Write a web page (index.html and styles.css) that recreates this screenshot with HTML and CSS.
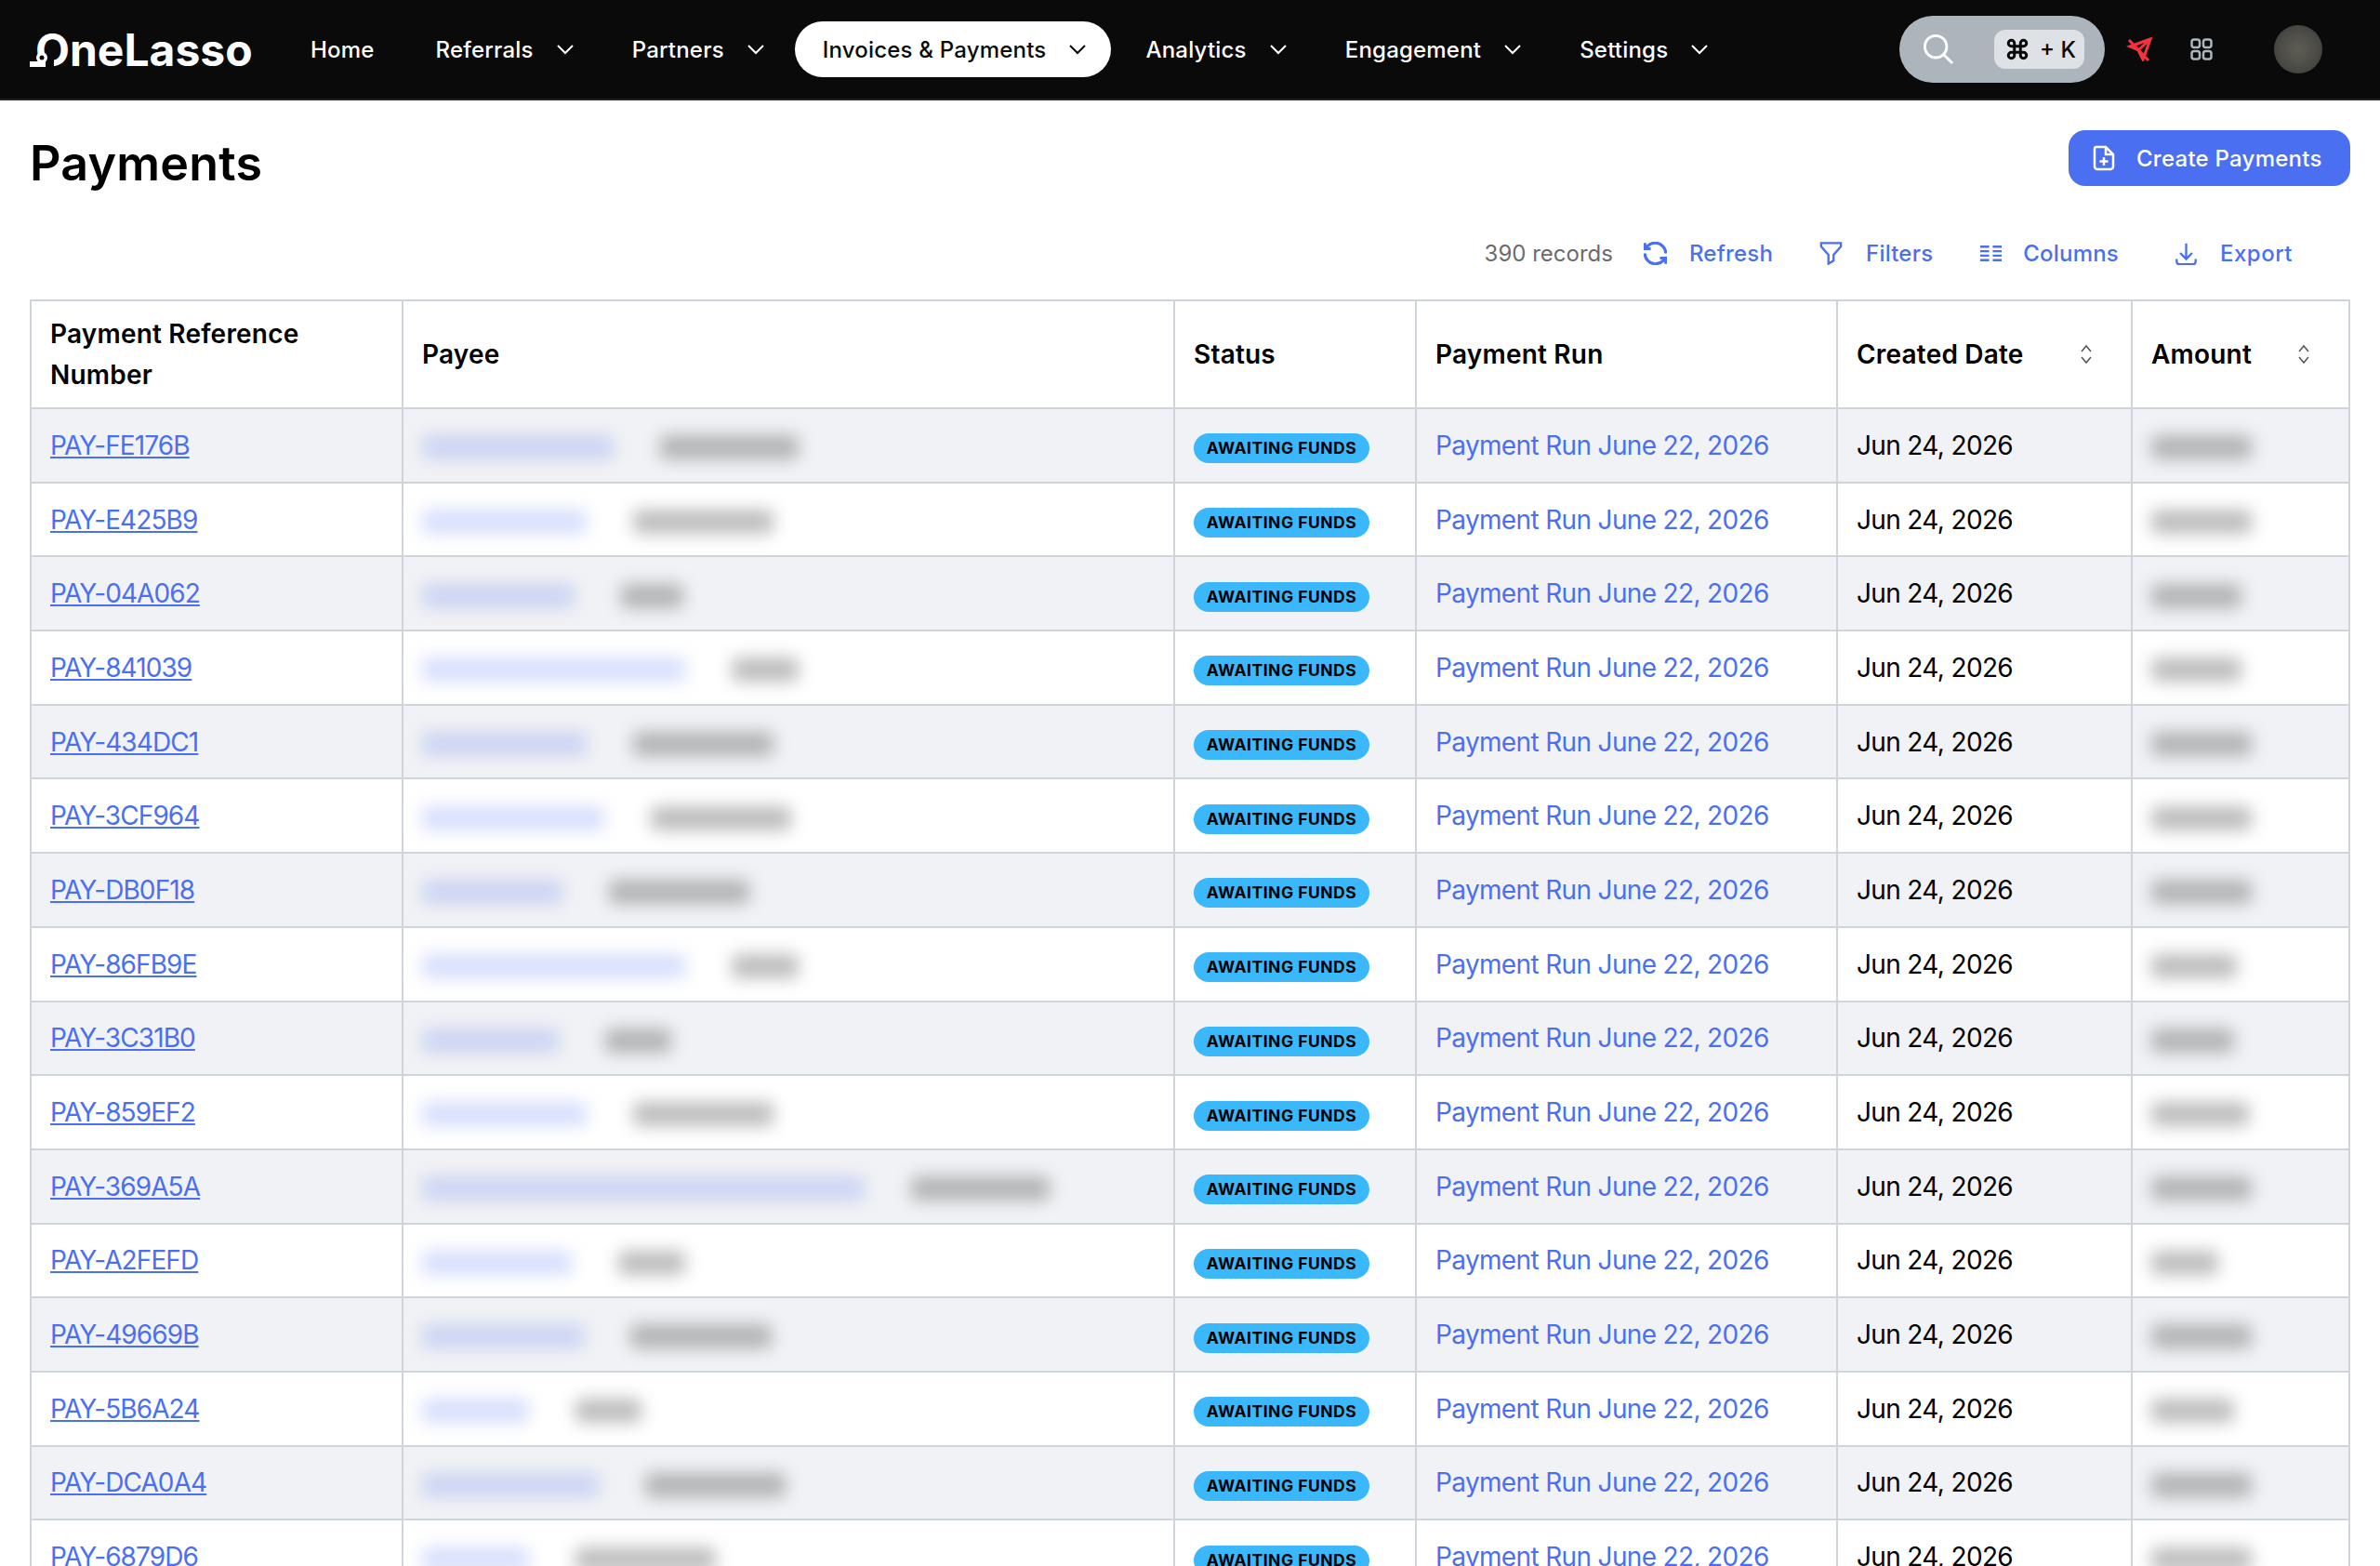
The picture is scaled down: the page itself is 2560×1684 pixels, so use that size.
FILE: index.html
```html
<!DOCTYPE html>
<html lang="en">
<head>
    <meta charset="UTF-8">
    <title>Payments</title>
    <link rel="stylesheet" href="styles.css">
</head>
<body>
    <div class="topbar">
        <div class="logo">
            <span class="logo-text">OneLasso</span>
            <svg class="logo-knot" viewBox="0 0 26 18"><path d="M16 4h10v14H16z" fill="#0a0a0a"/><path d="M0 12h17v6H0z" fill="#fff"/><circle cx="13" cy="8" r="6" fill="#fff"/><circle cx="13" cy="8" r="2.500" fill="#0a0a0a"/></svg>
        </div>
        <div class="nav">
            <a class="nav-item nav-home">Home</a>
            <a class="nav-item">Referrals <svg class="chev" viewBox="0 0 20 12"><path d="M2 2l8 8 8-8"/></svg></a>
            <a class="nav-item">Partners <svg class="chev" viewBox="0 0 20 12"><path d="M2 2l8 8 8-8"/></svg></a>
            <a class="nav-item active">Invoices &amp; Payments <svg class="chev" viewBox="0 0 20 12"><path d="M2 2l8 8 8-8"/></svg></a>
            <a class="nav-item">Analytics <svg class="chev" viewBox="0 0 20 12"><path d="M2 2l8 8 8-8"/></svg></a>
            <a class="nav-item">Engagement <svg class="chev" viewBox="0 0 20 12"><path d="M2 2l8 8 8-8"/></svg></a>
            <a class="nav-item">Settings <svg class="chev" viewBox="0 0 20 12"><path d="M2 2l8 8 8-8"/></svg></a>
        </div>
        <div class="top-right">
            <div class="search">
                <svg class="search-icon" viewBox="0 0 36 36"><circle cx="15" cy="15" r="12.500"/><path d="M24 24l10 10"/></svg>
                <div class="kbd">
                    <svg class="cmd-icon" viewBox="0 0 24 24"><path d="M15 6v12a3 3 0 1 0 3-3H6a3 3 0 1 0 3 3V6a3 3 0 1 0-3 3h12a3 3 0 1 0-3-3"/></svg>
                    <span>+ K</span>
                </div>
            </div>
            <svg class="plane-icon" viewBox="0 0 28 26"><path d="M26 2L4 10l9 4 5 10z"/><path d="M26 2L13 14"/><path d="M3 3l21 22"/></svg>
            <svg class="grid-icon" viewBox="0 0 24 24"><rect x="1.500" y="1.500" width="8.500" height="8.500" rx="2.500"/><rect x="14" y="1.500" width="8.500" height="8.500" rx="2.500"/><rect x="1.500" y="14" width="8.500" height="8.500" rx="2.500"/><rect x="14" y="14" width="8.500" height="8.500" rx="2.500"/></svg>
            <div class="avatar"></div>
        </div>
    </div>

    <div class="page">
        <div class="title-row">
            <h1>Payments</h1>
            <button class="btn-create">
                <svg class="doc-icon" viewBox="0 0 24 28"><path d="M4 2h10l8 8v13a3 3 0 0 1-3 3H5a3 3 0 0 1-3-3V4a2 2 0 0 1 2-2z"/><path d="M14 2v8h8"/><path d="M12 13v9M7.500 17.500h9"/></svg>
                Create Payments
            </button>
        </div>

        <div class="toolbar">
            <span class="records">390 records</span>
            <a class="tool tool-refresh">
                <svg viewBox="2 2 20 20"><path d="M21 12a9 9 0 0 0-9-9 9.750 9.750 0 0 0-6.740 2.740L3 8"/><path d="M3 3v5h5"/><path d="M3 12a9 9 0 0 0 9 9 9.750 9.750 0 0 0 6.740-2.740L21 16"/><path d="M16 16h5v5"/></svg>
                Refresh
            </a>
            <a class="tool tool-filters">
                <svg viewBox="0 0 26 27"><path d="M1.500 1.500h23v4L16 15v7l-6 3.500V15L1.500 5.500z"/></svg>
                Filters
            </a>
            <a class="tool tool-columns">
                <svg viewBox="0 0 26 18"><path d="M1 1.500h10M15 1.500h10M1 6.500h10M15 6.500h10M1 11.500h10M15 11.500h10M1 16.500h10M15 16.500h10"/></svg>
                Columns
            </a>
            <a class="tool tool-export">
                <svg viewBox="0 0 26 27"><path d="M13 2v17M6 13l7 7 7-7"/><path d="M2 20v3a3 3 0 0 0 3 3h16a3 3 0 0 0 3-3v-3"/></svg>
                Export
            </a>
        </div>

        <table class="pay-table">
            <colgroup>
                <col class="col-ref"><col class="col-payee"><col class="col-status"><col class="col-run"><col class="col-date"><col class="col-amount">
            </colgroup>
            <thead>
                <tr>
                    <th>Payment Reference Number</th>
                    <th>Payee</th>
                    <th>Status</th>
                    <th>Payment Run</th>
                    <th><div class="th-sort">Created Date <svg class="sort" viewBox="0 0 14 22"><path d="M2 8l5-6 5 6M2 14l5 6 5-6"/></svg></div></th>
                    <th><div class="th-sort">Amount <svg class="sort" viewBox="0 0 14 22"><path d="M2 8l5-6 5 6M2 14l5 6 5-6"/></svg></div></th>
                </tr>
            </thead>
            <tbody>
                <tr><td><a class="ref">PAY-FE176B</a></td><td><span class="blur-name" style="width:206px"></span><span class="blur-sub" style="width:149px"></span></td><td><span class="badge">AWAITING FUNDS</span></td><td><a class="run">Payment Run June 22, 2026</a></td><td>Jun 24, 2026</td><td><span class="blur-sub" style="width:108px"></span></td></tr>
                <tr><td><a class="ref">PAY-E425B9</a></td><td><span class="blur-name" style="width:177px"></span><span class="blur-sub" style="width:151px"></span></td><td><span class="badge">AWAITING FUNDS</span></td><td><a class="run">Payment Run June 22, 2026</a></td><td>Jun 24, 2026</td><td><span class="blur-sub" style="width:108px"></span></td></tr>
                <tr><td><a class="ref">PAY-04A062</a></td><td><span class="blur-name" style="width:164px"></span><span class="blur-sub" style="width:67px"></span></td><td><span class="badge">AWAITING FUNDS</span></td><td><a class="run">Payment Run June 22, 2026</a></td><td>Jun 24, 2026</td><td><span class="blur-sub" style="width:97px"></span></td></tr>
                <tr><td><a class="ref">PAY-841039</a></td><td><span class="blur-name" style="width:283px"></span><span class="blur-sub" style="width:72px"></span></td><td><span class="badge">AWAITING FUNDS</span></td><td><a class="run">Payment Run June 22, 2026</a></td><td>Jun 24, 2026</td><td><span class="blur-sub" style="width:97px"></span></td></tr>
                <tr><td><a class="ref">PAY-434DC1</a></td><td><span class="blur-name" style="width:177px"></span><span class="blur-sub" style="width:151px"></span></td><td><span class="badge">AWAITING FUNDS</span></td><td><a class="run">Payment Run June 22, 2026</a></td><td>Jun 24, 2026</td><td><span class="blur-sub" style="width:108px"></span></td></tr>
                <tr><td><a class="ref">PAY-3CF964</a></td><td><span class="blur-name" style="width:196px"></span><span class="blur-sub" style="width:151px"></span></td><td><span class="badge">AWAITING FUNDS</span></td><td><a class="run">Payment Run June 22, 2026</a></td><td>Jun 24, 2026</td><td><span class="blur-sub" style="width:108px"></span></td></tr>
                <tr><td><a class="ref">PAY-DB0F18</a></td><td><span class="blur-name" style="width:151px"></span><span class="blur-sub" style="width:151px"></span></td><td><span class="badge">AWAITING FUNDS</span></td><td><a class="run">Payment Run June 22, 2026</a></td><td>Jun 24, 2026</td><td><span class="blur-sub" style="width:108px"></span></td></tr>
                <tr><td><a class="ref">PAY-86FB9E</a></td><td><span class="blur-name" style="width:283px"></span><span class="blur-sub" style="width:72px"></span></td><td><span class="badge">AWAITING FUNDS</span></td><td><a class="run">Payment Run June 22, 2026</a></td><td>Jun 24, 2026</td><td><span class="blur-sub" style="width:92px"></span></td></tr>
                <tr><td><a class="ref">PAY-3C31B0</a></td><td><span class="blur-name" style="width:147px"></span><span class="blur-sub" style="width:71px"></span></td><td><span class="badge">AWAITING FUNDS</span></td><td><a class="run">Payment Run June 22, 2026</a></td><td>Jun 24, 2026</td><td><span class="blur-sub" style="width:89px"></span></td></tr>
                <tr><td><a class="ref">PAY-859EF2</a></td><td><span class="blur-name" style="width:177px"></span><span class="blur-sub" style="width:151px"></span></td><td><span class="badge">AWAITING FUNDS</span></td><td><a class="run">Payment Run June 22, 2026</a></td><td>Jun 24, 2026</td><td><span class="blur-sub" style="width:105px"></span></td></tr>
                <tr><td><a class="ref">PAY-369A5A</a></td><td><span class="blur-name" style="width:476px"></span><span class="blur-sub" style="width:149px"></span></td><td><span class="badge">AWAITING FUNDS</span></td><td><a class="run">Payment Run June 22, 2026</a></td><td>Jun 24, 2026</td><td><span class="blur-sub" style="width:108px"></span></td></tr>
                <tr><td><a class="ref">PAY-A2FEFD</a></td><td><span class="blur-name" style="width:161px"></span><span class="blur-sub" style="width:72px"></span></td><td><span class="badge">AWAITING FUNDS</span></td><td><a class="run">Payment Run June 22, 2026</a></td><td>Jun 24, 2026</td><td><span class="blur-sub" style="width:72px"></span></td></tr>
                <tr><td><a class="ref">PAY-49669B</a></td><td><span class="blur-name" style="width:174px"></span><span class="blur-sub" style="width:152px"></span></td><td><span class="badge">AWAITING FUNDS</span></td><td><a class="run">Payment Run June 22, 2026</a></td><td>Jun 24, 2026</td><td><span class="blur-sub" style="width:108px"></span></td></tr>
                <tr><td><a class="ref">PAY-5B6A24</a></td><td><span class="blur-name" style="width:115px"></span><span class="blur-sub" style="width:71px"></span></td><td><span class="badge">AWAITING FUNDS</span></td><td><a class="run">Payment Run June 22, 2026</a></td><td>Jun 24, 2026</td><td><span class="blur-sub" style="width:89px"></span></td></tr>
                <tr><td><a class="ref">PAY-DCA0A4</a></td><td><span class="blur-name" style="width:190px"></span><span class="blur-sub" style="width:151px"></span></td><td><span class="badge">AWAITING FUNDS</span></td><td><a class="run">Payment Run June 22, 2026</a></td><td>Jun 24, 2026</td><td><span class="blur-sub" style="width:108px"></span></td></tr>
                <tr><td><a class="ref">PAY-6879D6</a></td><td><span class="blur-name" style="width:115px"></span><span class="blur-sub" style="width:151px"></span></td><td><span class="badge">AWAITING FUNDS</span></td><td><a class="run">Payment Run June 22, 2026</a></td><td>Jun 24, 2026</td><td><span class="blur-sub" style="width:108px"></span></td></tr>
            </tbody>
        </table>
    </div>
</body>
</html>
```

FILE: styles.css
```css
* {
    margin: 0;
    padding: 0;
    box-sizing: border-box;
    font-family: Inter, 'Noto Sans', sans-serif;
}

html, body {
    height: 100%;
    overflow: hidden;
}

body {
    background: white;
    color: #000;
}

svg {
    fill: none;
    stroke: currentColor;
    flex-shrink: 0;
}

/* top bar */
.topbar {
    display: flex;
    align-items: center;
    height: 108px;
    background: #0a0a0a;
    border-bottom: 2px solid #222;
    padding-left: 32px;
    color: white;
}

.logo {
    position: relative;
    width: 240px;
    margin-right: 32px;
    padding-top: 2px;
}

.logo-text {
    display: block;
    font-size: 48px;
    font-weight: 700;
    line-height: 56px;
    padding-left: 6px;
}

.logo-knot {
    position: absolute;
    left: 0;
    bottom: 10px;
    width: 26px;
    height: 18px;
    stroke: none;
}

.nav {
    display: flex;
    align-items: center;
    gap: 2px;
}

.nav-item {
    display: flex;
    align-items: center;
    gap: 24px;
    height: 60px;
    padding: 0 30px;
    font-size: 24px;
    font-weight: 500;
    letter-spacing: 0.2px;
    border-radius: 30px;
}

.nav-home {
    padding-right: 34px;
}

.nav-item.active {
    background: white;
    color: #0a0a0a;
    padding-right: 26px;
    margin-right: 5px;
}

.chev {
    width: 20px;
    height: 12px;
    stroke-width: 2;
}

.top-right {
    display: flex;
    align-items: center;
    margin-left: auto;
    padding-right: 62px;
}

.search {
    display: flex;
    align-items: center;
    justify-content: space-between;
    width: 221px;
    height: 72px;
    padding: 0 22px 0 25px;
    background: #adb5bc;
    border-radius: 36px;
}

.search-icon {
    width: 34px;
    height: 34px;
    stroke: white;
    stroke-width: 3;
}

.kbd {
    display: flex;
    align-items: center;
    justify-content: space-between;
    width: 97px;
    height: 42px;
    padding: 0 9px 0 12px;
    background: #dee1e5;
    border-radius: 12px;
    color: #0a0a0a;
    font-size: 24px;
    font-weight: 500;
}

.cmd-icon {
    width: 26px;
    height: 26px;
    stroke-width: 2.800;
}

.plane-icon {
    width: 28px;
    height: 26px;
    margin-left: 23px;
    stroke: #f5333f;
    stroke-width: 3;
}

.grid-icon {
    width: 24px;
    height: 24px;
    margin-left: 41px;
    stroke: #adb5bc;
    stroke-width: 2.500;
}

.avatar {
    width: 52px;
    height: 52px;
    margin-left: 66px;
    border-radius: 50%;
    background: radial-gradient(circle, #5e5d55 0%, #4a4a44 60%, #33332f 100%);
}

/* page */
.page {
    padding: 0 32px;
}

.title-row {
    display: flex;
    align-items: center;
    justify-content: space-between;
    margin-top: 32px;
}

h1 {
    padding-top: 12px;
    font-size: 52px;
    font-weight: 600;
    line-height: 48px;
    letter-spacing: 0.2px;
}

.btn-create {
    display: flex;
    align-items: center;
    gap: 23px;
    width: 303px;
    height: 60px;
    padding-left: 26px;
    border: none;
    border-radius: 18px;
    background: #4a6ff0;
    color: white;
    font-size: 24px;
    font-weight: 500;
    letter-spacing: 0.25px;
}

.doc-icon {
    width: 24px;
    height: 28px;
    stroke: white;
    stroke-width: 2.500;
}

.toolbar {
    display: flex;
    align-items: center;
    justify-content: flex-end;
    height: 44px;
    margin-top: 50px;
    padding-right: 62px;
    font-size: 24px;
}

.records {
    color: #6b6b6b;
    margin-right: 33px;
}

.tool {
    display: flex;
    align-items: center;
    gap: 25px;
    color: #4a6ff0;
    font-weight: 500;
    letter-spacing: 0.2px;
}

.tool svg {
    width: 25px;
    height: 25px;
    stroke-width: 2.500;
}

.tool-refresh {
    gap: 24px;
}

.tool-filters {
    margin-left: 50px;
}

.tool-columns {
    margin-left: 50px;
    gap: 22px;
}

.tool-export {
    margin-left: 60px;
    gap: 24px;
    letter-spacing: 0.5px;
}

/* table */
.pay-table {
    width: 2494px;
    margin-top: 28px;
    table-layout: fixed;
    border-collapse: collapse;
    font-size: 28px;
    letter-spacing: -0.65px;
}

.col-ref { width: 400px; }
.col-payee { width: 830px; }
.col-status { width: 260px; }
.col-run { width: 453px; }
.col-date { width: 317px; }
.col-amount { width: 234px; }

.pay-table th,
.pay-table td {
    border: 2px solid #cfd3da;
    padding: 0 20px;
    text-align: left;
    vertical-align: middle;
    white-space: nowrap;
}

.pay-table th {
    height: 116px;
    font-weight: 600;
    line-height: 44px;
    letter-spacing: 0.2px;
    white-space: normal;
}

.pay-table td {
    height: 79.700px;
}

.pay-table tbody tr:nth-child(odd) {
    background: #f1f2f5;
}

.th-sort {
    display: flex;
    align-items: center;
    justify-content: space-between;
    padding-right: 21px;
}

.sort {
    width: 14px;
    height: 22px;
    stroke: #555;
    stroke-width: 1.500;
}

.ref {
    color: #4a6ff0;
    text-decoration: underline;
    letter-spacing: -0.9px;
}

.run {
    color: #4a6ff0;
}

.badge {
    display: inline-block;
    width: 189px;
    height: 32px;
    margin-top: 7px;
    border-radius: 16px;
    background: #3ab8fb;
    font-size: 17.500px;
    font-weight: 700;
    line-height: 32px;
    letter-spacing: 0.5px;
    text-align: center;
    vertical-align: middle;
}

.blur-name,
.blur-sub {
    display: inline-block;
    height: 26px;
    border-radius: 6px;
    filter: blur(9px);
    vertical-align: middle;
}

.blur-name {
    background: rgba(74, 111, 240, 0.22);
    margin-right: 50px;
}

.blur-sub {
    background: rgba(0, 0, 0, 0.26);
}
```
